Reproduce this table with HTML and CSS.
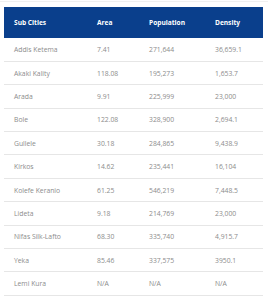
FILE: index.html
```html
<!DOCTYPE html>
<html lang="en">
<head>
<meta charset="utf-8">
<title>Sub Cities</title>
<link rel="stylesheet" href="styles.css">
</head>
<body>
<div class="wrap">
  <table class="cities">
    <colgroup>
      <col class="c1"><col class="c2"><col class="c3"><col class="c4">
    </colgroup>
    <thead>
      <tr><th>Sub Cities</th><th>Area</th><th>Population</th><th>Density</th></tr>
    </thead>
    <tbody>
      <tr><td>Addis Ketema</td><td>7.41</td><td>271,644</td><td>36,659.1</td></tr>
      <tr><td>Akaki Kality</td><td>118.08</td><td>195,273</td><td>1,653.7</td></tr>
      <tr><td>Arada</td><td>9.91</td><td>225,999</td><td>23,000</td></tr>
      <tr><td>Bole</td><td>122.08</td><td>328,900</td><td>2,694.1</td></tr>
      <tr><td>Gullele</td><td>30.18</td><td>284,865</td><td>9,438.9</td></tr>
      <tr><td>Kirkos</td><td>14.62</td><td>235,441</td><td>16,104</td></tr>
      <tr><td>Kolefe Keranio</td><td>61.25</td><td>546,219</td><td>7,448.5</td></tr>
      <tr><td>Lideta</td><td>9.18</td><td>214,769</td><td>23,000</td></tr>
      <tr><td>Nifas Silk-Lafto</td><td>68.30</td><td>335,740</td><td>4,915.7</td></tr>
      <tr><td>Yeka</td><td>85.46</td><td>337,575</td><td>3950.1</td></tr>
      <tr><td>Lemi Kura</td><td>N/A</td><td>N/A</td><td>N/A</td></tr>
    </tbody>
  </table>
</div>
</body>
</html>
```
FILE: styles.css
```css
html, body {
  margin: 0;
  padding: 0;
  background: #ffffff;
}
body {
  font-family: "Open Sans", "Liberation Sans", sans-serif;
}
.wrap {
  padding: 7px 5px 0 4px;
  border-top: 1px solid #f0f0f0;
  margin-top: 1px;
  padding-top: 5px;
}
.cities {
  width: 259px;
  border-collapse: collapse;
  table-layout: fixed;
}
.c1 { width: 83px; }
.c2 { width: 52px; }
.c3 { width: 66px; }
.c4 { width: 58px; }
.cities th {
  background: #0a3f8c;
  color: #ffffff;
  font-weight: 700;
  font-size: 6.6px;
  text-align: left;
  height: 31px;
  padding: 0 0 0 10px;
  box-sizing: border-box;
}
.cities td {
  color: #8c8c8c;
  font-size: 6.8px;
  text-align: left;
  height: 23.4px;
  padding: 0 0 0 10px;
  box-sizing: border-box;
  border-bottom: 1px solid #e6e6e6;
  white-space: nowrap;
}
```
